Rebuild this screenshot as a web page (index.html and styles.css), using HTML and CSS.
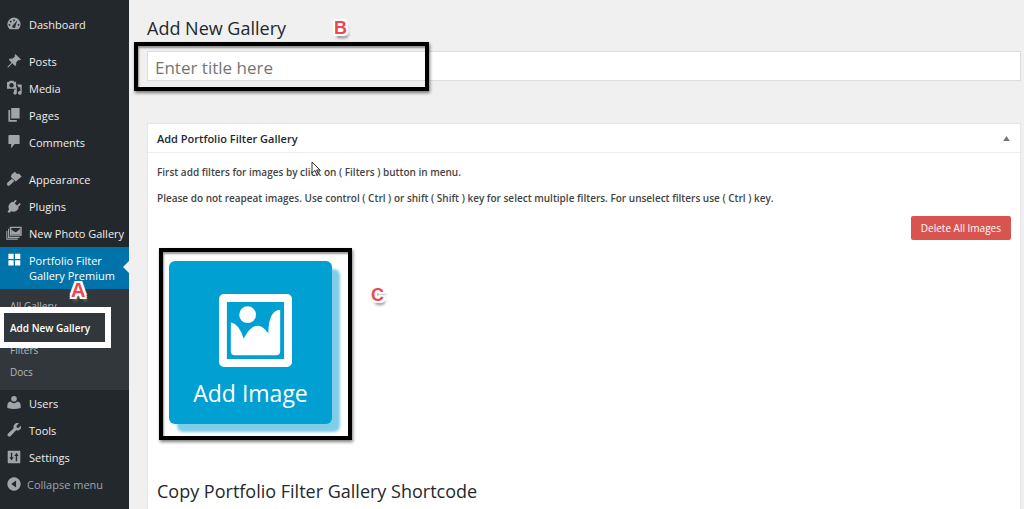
FILE: index.html
```html
<!DOCTYPE html>
<html lang="en">
<head>
  <meta charset="UTF-8">
  <meta name="viewport" content="width=device-width, initial-scale=1.0">
  <title>Add New Gallery</title>
  <link rel="stylesheet" href="styles.css">
</head>
<body>
  <nav class="sidebar">
    <ul class="menu">
      <li><a href="#"><svg viewBox="0 0 20 20"><path fill-rule="evenodd" d="M3.800 17.500A9.500 9.500 0 1 1 16.200 17.500zM10 3.500a1.200 1.200 0 1 0 .01 0zM5.300 5.500a1.200 1.200 0 1 0 .01 0zM3.500 10a1.200 1.200 0 1 0 .01 0zM16.500 10a1.200 1.200 0 1 0 .01 0zM14.700 4.500L9 11.500a2.200 2.200 0 1 0 3 1.600z"/></svg>Dashboard</a></li>
      <li class="separator"></li>
      <li><a href="#"><svg viewBox="0 0 20 20"><path d="M12 0l8 8-2 1-1.500-.4-3.500 3.500c.6 2 .2 3.900-1.500 5.200l-4-4L1.500 19.500l-1-1 6-6.200L2.500 8.300c1.300-1.700 3-2.200 5.300-1.500L11.200 3.500 11 2z"/></svg>Posts</a></li>
      <li><a href="#"><svg viewBox="0 0 20 20"><path fill-rule="evenodd" d="M1 1h2l1-1.500h5L10 1h3v10H0V2zM6.500 3a3.200 3.200 0 1 0 .01 0z"/><path d="M14 5h7v12a2.700 2.700 0 1 1-2-2.600V9h-3v-1zM10 12h2.500V9H14v8.500a2.500 2.500 0 1 1-4-2.500z"/></svg>Media</a></li>
      <li><a href="#"><svg viewBox="0 0 20 20"><path d="M6 0h12v15H6zM2 3h2.500v14H14v2.500H2z"/></svg>Pages</a></li>
      <li><a href="#"><svg viewBox="0 0 20 20"><path d="M3 0h14a1 1 0 0 1 1 1v11a1 1 0 0 1-1 1h-6l-5 6v-6H3a1 1 0 0 1-1-1V1a1 1 0 0 1 1-1z"/></svg>Comments</a></li>
      <li class="separator"></li>
      <li><a href="#"><svg viewBox="0 0 20 20"><path d="M6.500 3.500L11-.500l3.500 3.500L17 2l4 4.500-8.500 7L5.500 7z"/><path d="M7 9.500l3.500 3.500L4 19q-2 1.500-3.500 0t0-3.500z"/></svg>Appearance</a></li>
      <li><a href="#"><svg viewBox="0 0 20 20"><path d="M12 1l2 1.500L11 6l3.300 3.200L18 5.800l1.700 1.700L16 11.300l.8 1.200c-2 5-6.500 6.500-10.500 5L3 20l-2.300-2L3 15C1 11 2.500 6 7.500 3.800l1.500 1z"/></svg>Plugins</a></li>
      <li><a href="#"><svg viewBox="0 0 20 20"><path fill-rule="evenodd" d="M4 1h17v13H4zM6 3v9h13V3z"/><path d="M6 12V5l4 3 3 1 6-5v8z"/><path d="M1.500 4h1.500v11.500h15V17H1.500zM-1 7h1.500v11h15v1.500H-1z"/></svg>New Photo Gallery</a></li>
      <li class="current">
        <a href="#"><svg viewBox="0 0 20 20"><path d="M2 1h7.500v7.500H2zM11.500 1H19v7.500h-7.500zM2 10.500h7.500V18H2zM11.500 10.500H19V18h-7.500z"/></svg>Portfolio Filter Gallery Premium</a>
        <ul class="submenu">
          <li><a href="#">All Gallery</a></li>
          <li class="active"><a href="#">Add New Gallery</a><span class="frame frame-menu"></span></li>
          <li><a href="#">Filters</a></li>
          <li><a href="#">Docs</a></li>
        </ul>
        <span class="marker marker-a">A</span>
      </li>
      <li><a href="#"><svg viewBox="0 0 20 20"><circle cx="10" cy="4" r="4"/><path d="M5 8q5 5 10 0 4.500 1 4.500 5.500V17q-9.500 3-19 0v-3.500Q.5 9 5 8z"/></svg>Users</a></li>
      <li><a href="#"><svg viewBox="0 0 20 20"><path d="M17 .500l-3.500 3.800.5 2.200 2.200.500L20 3.500c1 5-2.500 8-7 7l-8 8.300c-2.500 2-5.500-.800-3.800-3.300l8.300-8C8.500 2.500 12.500-1.500 17 .500z"/></svg>Tools</a></li>
      <li><a href="#"><svg viewBox="0 0 20 20"><path fill-rule="evenodd" d="M2 1h16a1 1 0 0 1 1 1v16a1 1 0 0 1-1 1H2a1 1 0 0 1-1-1V2a1 1 0 0 1 1-1zM5.500 4v6.500H3.500L6.500 15l3-4.500h-2V4zM12.500 16h2V8.500h2L13.500 4l-3 4.500h2z"/></svg>Settings</a></li>
      <li><button type="button" class="collapse"><svg viewBox="0 0 20 20"><path fill-rule="evenodd" d="M10 .500a9.500 9.500 0 1 0 .01 0zM13 5v10l-7-5z"/></svg>Collapse menu</button></li>
    </ul>
  </nav>

  <main class="content">
    <h1>Add New Gallery <span class="marker marker-b">B</span></h1>
    <div class="title-box">
      <input type="text" id="title" aria-label="Enter title here" placeholder="Enter title here">
      <span class="frame frame-title"></span>
    </div>

    <section class="postbox">
      <div class="postbox-header">
        <h2>Add Portfolio Filter Gallery</h2>
        <button type="button" class="toggle" aria-label="Toggle panel"><svg viewBox="0 0 8 6"><path d="M4 0l4 6H0z"/></svg></button>
      </div>
      <div class="inside">
        <p>First add filters for images by click on ( Filters ) button in menu.</p>
        <p>Please do not reapeat images. Use control ( Ctrl ) or shift ( Shift ) key for select multiple filters. For unselect filters use ( Ctrl ) key.</p>
        <div class="actions">
          <button type="button" class="delete">Delete All Images</button>
        </div>
        <div class="upload">
          <button type="button" class="add-image">
            <svg viewBox="0 0 74 74"><path fill-rule="evenodd" d="M5 0h64a5 5 0 0 1 5 5v64a5 5 0 0 1-5 5H5a5 5 0 0 1-5-5V5a5 5 0 0 1 5-5zM8 8v58h58V8z"/><circle cx="29" cy="21" r="8.500"/><path d="M12 29q8 1 13 16 13-23 25-5 0-23 12-24v42a4 4 0 0 1-4 4H16a4 4 0 0 1-4-4z"/></svg>
            Add Image
          </button>
          <span class="frame frame-image"></span>
          <span class="marker marker-c">C</span>
        </div>
        <h3>Copy Portfolio Filter Gallery Shortcode</h3>
      </div>
      <svg class="cursor" viewBox="0 0 10 16"><path d="M1 1v11l3-2.500 2 4.500 1.500-1-2-4H9z"/></svg>
    </section>
  </main>
</body>
</html>
```
FILE: styles.css
```css
* {
  box-sizing: border-box;
}
body {
  margin: 0;
  display: flex;
  min-height: 100vh;
  background-color: #f0f0f0;
  color: #32373c;
  font-family: "Open Sans", "Noto Sans", sans-serif;
  font-size: 12px;
}
button, input {
  font-family: inherit;
}

/* Sidebar */
.sidebar {
  flex: none;
  width: 129px;
  padding-top: 11px;
  background-color: #23282d;
}
.menu, .submenu {
  list-style: none;
  margin: 0;
  padding: 0;
}
.menu a, .collapse {
  display: flex;
  align-items: flex-start;
  gap: 8px;
  padding: 6px 0 6px 7px;
  color: #eee;
  font-size: 11px;
  line-height: 15px;
  text-decoration: none;
  white-space: nowrap;
}
.menu svg {
  flex: none;
  width: 14px;
  height: 14px;
  overflow: visible;
  fill: #a0a5aa;
}
.separator {
  height: 10px;
}
.menu .collapse {
  gap: 6px;
  border: none;
  background: none;
  color: #a0a5aa;
  cursor: pointer;
}
.current {
  position: relative;
}
.menu .current > a {
  background-color: #0073aa;
  color: #fff;
  white-space: normal;
}
.menu .current > a svg {
  fill: #fff;
}
.current::after {
  content: "";
  position: absolute;
  top: 14px;
  right: 0;
  border: 6px solid transparent;
  border-left: none;
  border-right-color: #f0f0f0;
}
.submenu {
  padding: 6px 0 7px;
  background-color: #32373c;
}
.submenu li {
  position: relative;
}
.menu .submenu a {
  padding: 4px 0 3px 10px;
  color: #b4b9be;
  font-size: 10px;
}
.menu .submenu .active a {
  color: #fff;
  font-weight: 600;
}

/* Callouts */
.frame {
  position: absolute;
  pointer-events: none;
}
.frame-menu {
  z-index: 1;
  top: -10px;
  right: 18px;
  bottom: -9px;
  left: -2px;
  border: 6px solid #fff;
}
.frame-title, .frame-image {
  border: 4px solid #000;
  box-shadow: 1px 2px 3px rgba(0, 0, 0, 0.5), inset 1px 2px 2px rgba(0, 0, 0, 0.4);
}
.frame-title {
  top: -9px;
  left: -13px;
  width: 295px;
  height: 49px;
}
.frame-image {
  top: -13px;
  left: -10px;
  width: 193px;
  height: 192px;
}
.marker {
  position: absolute;
  z-index: 2;
  color: #f0474f;
  font-family: "Liberation Sans", Arial, sans-serif;
  font-weight: bold;
  text-shadow: -2px -2px #fff, 2px -2px #fff, -2px 2px #fff, 2px 2px #fff, 0 -2px #fff, 0 2px #fff, -2px 0 #fff, 2px 0 #fff, 2px 4px 3px #777;
}
.marker-a {
  top: 32px;
  left: 71px;
  font-size: 20px;
  line-height: 22px;
}
.marker-b {
  top: 1px;
  left: 187px;
  font-size: 18px;
  line-height: 24px;
}
.marker-c {
  top: 24px;
  left: 202px;
  font-size: 18px;
  line-height: 20px;
}

/* Content */
.content {
  display: flex;
  flex: 1;
  flex-direction: column;
  min-width: 0;
  padding: 15px 3px 0 18px;
}
h1, h3 {
  margin: 0;
  color: #23282d;
  font-size: 18px;
  font-weight: 400;
  line-height: 26px;
}
h1 {
  position: relative;
}
.title-box {
  position: relative;
  margin: 10px 0 42px;
}
.title-box input {
  display: block;
  width: 100%;
  height: 30px;
  padding: 3px 7px 1px;
  border: 1px solid #ddd;
  background-color: #fff;
  color: #32373c;
  font-size: 17px;
}
.title-box input::placeholder {
  color: #757575;
}
.postbox {
  position: relative;
  flex: 1;
  border: 1px solid #e5e5e5;
  border-bottom: none;
  background-color: #fff;
}
.postbox-header {
  display: flex;
  justify-content: space-between;
  align-items: center;
  height: 29px;
  padding: 0 10px 0 9px;
  border-bottom: 1px solid #eee;
}
h2 {
  margin: 0;
  color: #23282d;
  font-size: 11px;
  font-weight: 600;
}
.toggle {
  display: flex;
  padding: 0;
  border: none;
  background: none;
  cursor: pointer;
}
.toggle svg {
  width: 7px;
  height: 5px;
  fill: #72777c;
}
.inside {
  padding: 11px 9px 0;
}
.inside p {
  margin: 0 0 10px;
  color: #444;
  font-size: 10px;
  font-weight: 600;
  line-height: 16px;
}
.actions {
  display: flex;
  justify-content: flex-end;
}
.delete {
  height: 24px;
  padding: 0 10px;
  border: none;
  border-radius: 2px;
  background-color: #d9534f;
  color: #fff;
  font-size: 10px;
  cursor: pointer;
}
.upload {
  position: relative;
  margin: 21px 0 54px 12px;
}
.add-image {
  display: flex;
  flex-direction: column;
  justify-content: flex-end;
  align-items: center;
  gap: 10px;
  width: 163px;
  height: 163px;
  padding: 0 0 15px;
  border: none;
  border-radius: 6px;
  background-color: #00a0d2;
  box-shadow: 8px 8px 3px #7fcde6;
  color: #fff;
  font-size: 23px;
  line-height: 32px;
  cursor: pointer;
}
.add-image svg {
  width: 73px;
  height: 73px;
  margin-left: 9px;
  fill: #fff;
}
.cursor {
  position: absolute;
  top: 37px;
  left: 163px;
  width: 10px;
  height: 16px;
  fill: #fff;
  stroke: #333;
}
```
